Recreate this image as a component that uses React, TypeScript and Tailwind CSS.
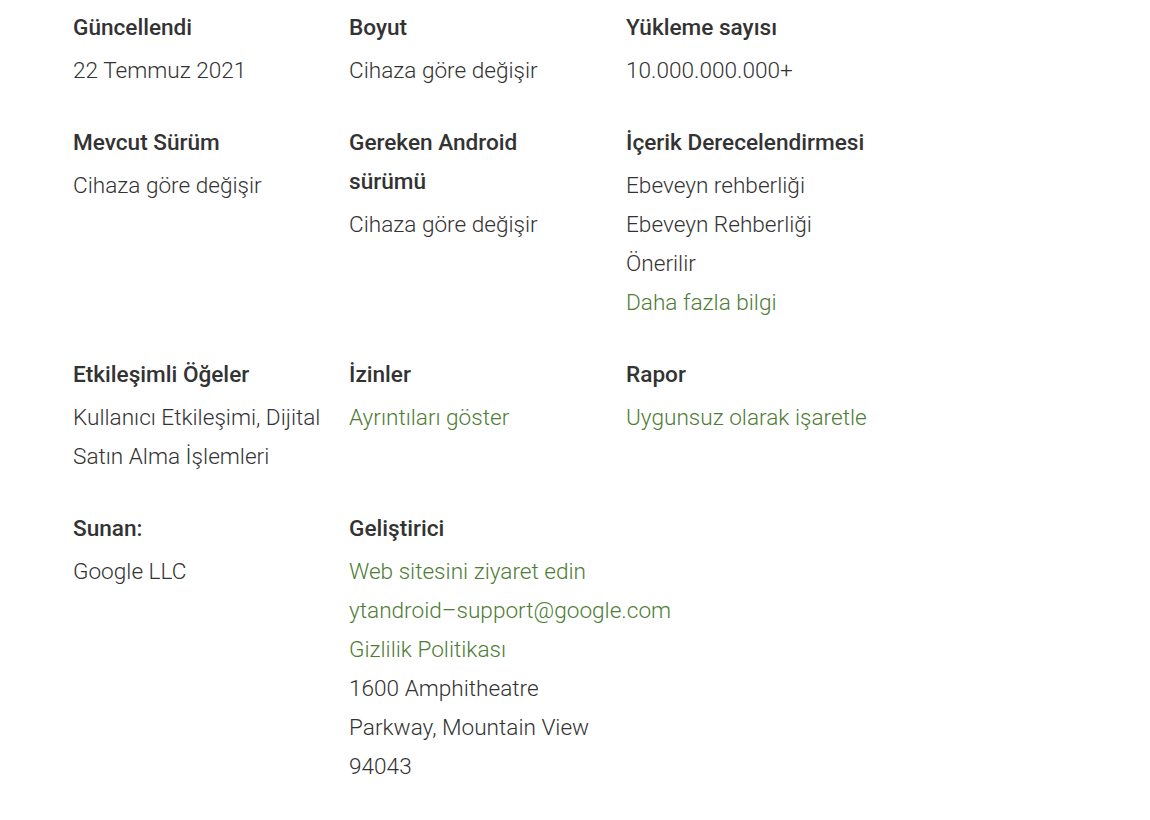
type Line = { text: string; link?: boolean };
type Item = { label: string[]; value: Line[] };

const rows: Item[][] = [
  [
    { label: ["Güncellendi"], value: [{ text: "22 Temmuz 2021" }] },
    { label: ["Boyut"], value: [{ text: "Cihaza göre değişir" }] },
    { label: ["Yükleme sayısı"], value: [{ text: "10.000.000.000+" }] },
  ],
  [
    { label: ["Mevcut Sürüm"], value: [{ text: "Cihaza göre değişir" }] },
    { label: ["Gereken Android", "sürümü"], value: [{ text: "Cihaza göre değişir" }] },
    {
      label: ["İçerik Derecelendirmesi"],
      value: [
        { text: "Ebeveyn rehberliği" },
        { text: "Ebeveyn Rehberliği" },
        { text: "Önerilir" },
        { text: "Daha fazla bilgi", link: true },
      ],
    },
  ],
  [
    {
      label: ["Etkileşimli Öğeler"],
      value: [{ text: "Kullanıcı Etkileşimi, Dijital" }, { text: "Satın Alma İşlemleri" }],
    },
    { label: ["İzinler"], value: [{ text: "Ayrıntıları göster", link: true }] },
    { label: ["Rapor"], value: [{ text: "Uygunsuz olarak işaretle", link: true }] },
  ],
  [
    { label: ["Sunan:"], value: [{ text: "Google LLC" }] },
    {
      label: ["Geliştirici"],
      value: [
        { text: "Web sitesini ziyaret edin", link: true },
        { text: "ytandroid–support@google.com", link: true },
        { text: "Gizlilik Politikası", link: true },
        { text: "1600 Amphitheatre" },
        { text: "Parkway, Mountain View" },
        { text: "94043" },
      ],
    },
  ],
];

function InfoItem({ item }: { item: Item }) {
  return (
    <div>
      <div className="text-[22.6px] leading-[39px] font-medium text-[#333333]">
        {item.label.map((l) => (
          <div key={l}>{l}</div>
        ))}
      </div>
      <div className="mt-[4px] text-[22.6px] leading-[39px] font-light">
        {item.value.map((v) =>
          v.link ? (
            <a key={v.text} href="#" className="block whitespace-nowrap text-[#4e7d35]">
              {v.text}
            </a>
          ) : (
            <div key={v.text} className="whitespace-nowrap text-[#333333]">
              {v.text}
            </div>
          ),
        )}
      </div>
    </div>
  );
}

export default function App() {
  return (
    <div className="min-h-[820px] bg-white pl-[73px] pt-[8px] font-['Roboto',sans-serif]">
      <div className="grid grid-cols-[276px_277px_276px] gap-y-[33px]">
        {rows.map((row, i) =>
          [0, 1, 2].map((j) =>
            row[j] ? <InfoItem key={`${i}-${j}`} item={row[j]} /> : <div key={`${i}-${j}`} />,
          ),
        )}
      </div>
    </div>
  );
}
